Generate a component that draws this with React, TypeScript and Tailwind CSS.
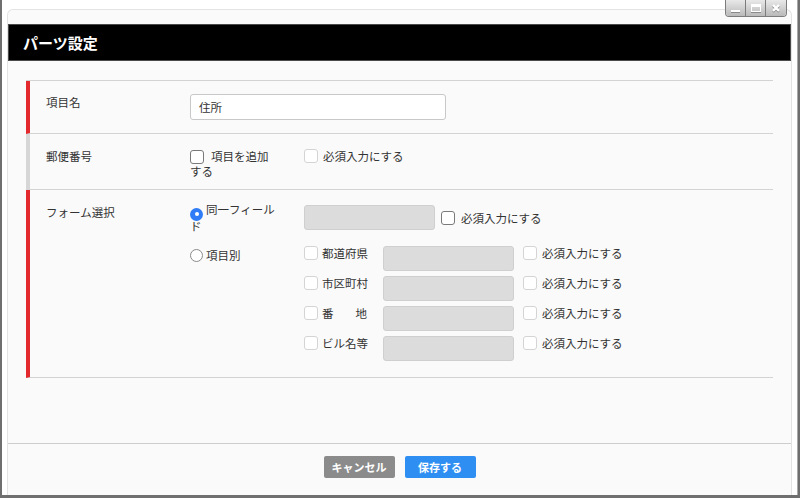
import React from "react";

const font = { fontFamily: '"Noto Sans CJK JP", "Noto Sans", sans-serif' };

function Check({ dark = false }: { dark?: boolean }) {
  return (
    <span
      className={
        "inline-block h-[14px] w-[14px] shrink-0 rounded-[3px] border bg-white align-[-3px] " +
        (dark ? "border-[#7a7a7a]" : "border-[#d4d4d4]")
      }
    />
  );
}

function Radio({ checked = false }: { checked?: boolean }) {
  return checked ? (
    <span className="inline-flex h-[13px] w-[13px] shrink-0 items-center justify-center rounded-full bg-[#2f7cf6] align-[-2px]">
      <span className="h-[4px] w-[4px] rounded-full bg-white" />
    </span>
  ) : (
    <span className="inline-block h-[13px] w-[13px] shrink-0 rounded-full border border-[#8a8a8a] bg-white align-[-2px]" />
  );
}

function GrayBox() {
  return <div className="h-[25px] w-[131px] shrink-0 rounded-[3px] border border-[#cfcfcf] bg-[#dcdcdc]" />;
}

function SubRow({ label }: { label: React.ReactNode }) {
  return (
    <div className="flex h-[30px] items-start">
      <div className="flex w-[79px] items-center">
        <Check />
        <span className="ml-[4px]">{label}</span>
      </div>
      <GrayBox />
      <div className="ml-[9px] flex items-center">
        <Check />
        <span className="ml-[5px]">必須入力にする</span>
      </div>
    </div>
  );
}

function WinControls() {
  const btn =
    "flex h-[16px] w-[20px] items-center justify-center bg-gradient-to-b from-[#e9e9e9] to-[#b9b9b9] border-[#7c7c7c]";
  return (
    <div className="absolute right-[10px] top-0 flex overflow-hidden rounded-b-[4px] border border-t-0 border-[#7c7c7c]">
      <div className={btn + " border-r"}>
        <span className="mt-[5px] h-[2px] w-[9px] bg-white shadow-[0_1px_0_#8a8a8a]" />
      </div>
      <div className={btn + " border-r"}>
        <span className="h-[8px] w-[10px] border border-t-[3px] border-white shadow-[0_1px_0_#8a8a8a]" />
      </div>
      <div className={btn}>
        <svg width="10" height="10" viewBox="0 0 10 10">
          <path d="M2 2 L8 8 M8 2 L2 8" stroke="#8a8a8a" strokeWidth="2.6" transform="translate(0 0.8)" />
          <path d="M2 2 L8 8 M8 2 L2 8" stroke="#fff" strokeWidth="2.4" />
        </svg>
      </div>
    </div>
  );
}

export default function App() {
  return (
    <div style={font} className="h-[498px] w-[800px] overflow-hidden bg-[#6f6f6f] pb-[3px] pl-[2px] pr-[2px] text-[11.5px] leading-[14px] text-[#333]">
      <div className="relative flex h-full flex-col border-r border-[#a9a9a9] bg-white px-[5px] pt-[9px]">
        <WinControls />
        <div className="flex flex-1 flex-col rounded-t-[6px] border border-b-0 border-[#e3e3e3] bg-[#fafafa] pt-[14px]">
          <div className="flex h-[37px] items-center border border-[#4a4a4a] bg-black pl-[14px] text-[15px] font-bold text-white">
            パーツ設定
          </div>

          <div className="mx-[18px] mt-[19px] border-t border-[#d3d3d3]">
            {/* 項目名 */}
            <div className="flex h-[53px] border-b border-l-4 border-b-[#d3d3d3] border-l-[#e3292e]">
              <div className="w-[160px] pl-[16px] pt-[14px]">項目名</div>
              <div className="pt-[13px]">
                <div className="flex h-[26px] w-[256px] items-center rounded-[3px] border border-[#c8c8c8] bg-white pl-[8px]">
                  住所
                </div>
              </div>
            </div>

            {/* 郵便番号 */}
            <div className="flex h-[56px] border-b border-l-4 border-b-[#d3d3d3] border-l-[#d6d6d6]">
              <div className="w-[160px] pl-[16px] pt-[15px]">郵便番号</div>
              <div className="w-[114px] pt-[15px]">
                <div className="w-[84px]">
                  <Check dark />
                  <span className="ml-[7px]">項目を追加する</span>
                </div>
              </div>
              <div className="flex items-start pt-[15px]">
                <Check />
                <span className="ml-[5px]">必須入力にする</span>
              </div>
            </div>

            {/* フォーム選択 */}
            <div className="flex h-[188px] border-b border-l-4 border-b-[#d3d3d3] border-l-[#e3292e]">
              <div className="w-[160px] pl-[16px] pt-[15px]">フォーム選択</div>
              <div className="w-[114px] pt-[14px] leading-[11px]">
                <div className="w-[88px]">
                  <Radio checked />
                  <span className="ml-[3px]">同一フィールド</span>
                </div>
                <div className="mt-[17px]">
                  <Radio />
                  <span className="ml-[3px]">項目別</span>
                </div>
              </div>
              <div className="pt-[15px]">
                <div className="flex items-center">
                  <GrayBox />
                  <span className="ml-[6px] flex items-center">
                    <Check dark />
                    <span className="ml-[6px]">必須入力にする</span>
                  </span>
                </div>
                <div className="mt-[16px]">
                  <SubRow label="都道府県" />
                  <SubRow label="市区町村" />
                  <SubRow
                    label={
                      <span className="flex w-[45px] justify-between">
                        <span>番</span>
                        <span>地</span>
                      </span>
                    }
                  />
                  <SubRow label="ビル名等" />
                </div>
              </div>
            </div>
          </div>

          <div className="flex-1" />

          <div className="border-t border-[#cdcdcd]">
            <div className="flex h-[51px] justify-center gap-[10px] pt-[12px]">
              <button className="h-[22px] w-[71px] rounded-[2px] bg-[#8b8b8b] text-[11px] font-bold text-white">
                キャンセル
              </button>
              <button className="h-[22px] w-[71px] rounded-[2px] bg-[#2e8ef2] text-[11px] font-bold text-white">
                保存する
              </button>
            </div>
          </div>
        </div>
      </div>
    </div>
  );
}
